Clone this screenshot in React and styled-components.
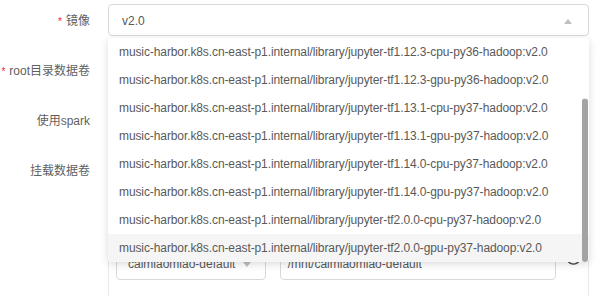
import React, { useLayoutEffect, useRef } from 'react';
import styled, { createGlobalStyle } from 'styled-components';

const Global = createGlobalStyle`
  html, body { margin: 0; padding: 0; background: #fff; }
  body {
    font-family: "Liberation Sans", "Noto Sans CJK SC", sans-serif;
    overflow: hidden;
  }
`;

const Page = styled.div`
  width: 600px;
  height: 296px;
  overflow: hidden;
  padding-top: 4px;
  box-sizing: border-box;
`;

const Row = styled.div`
  display: flex;
  align-items: flex-start;
  height: 32px;
  margin-bottom: 18px;
`;

const Label = styled.label`
  width: 108px;
  height: 32px;
  flex: none;
  box-sizing: border-box;
  padding: 2px 18px 0 0;
  display: flex;
  align-items: center;
  justify-content: flex-end;
  font-size: 12px;
  line-height: 1;
  color: #5f5f5f;
  white-space: nowrap;
`;

const Req = styled.span`
  color: #f5222d;
  font-size: 10px;
  margin-right: 4px;
  margin-top: 2px;
`;

const Control = styled.div`
  width: 481px;
  flex: none;
  position: relative;
`;

const SelectBox = styled.div`
  height: 32px;
  box-sizing: border-box;
  border: 1px solid #d9d9d9;
  border-radius: 4px;
  display: flex;
  align-items: center;
  justify-content: space-between;
  padding: 2px 16px 0 13px;
  font-size: 12px;
  color: #595959;
  background: #fff;
`;

const Menu = styled.div`
  position: absolute;
  top: 34px;
  left: 0;
  width: 481px;
  height: 224px;
  background: #fff;
  border-radius: 4px;
  box-shadow: 0 2px 8px rgba(0, 0, 0, 0.15);
  z-index: 10;
`;

const List = styled.div`
  height: 100%;
  overflow: hidden;
  border-radius: 4px;
`;

const Thumb = styled.div`
  position: absolute;
  right: 1px;
  top: 61px;
  width: 6px;
  height: 163px;
  background: #a3a3a3;
  border-radius: 2px 2px 3px 3px;
  box-shadow: 0 -1px 0 #eee;
`;

const Option = styled.div`
  height: 28px;
  line-height: 28px;
  padding: 0 11px;
  font-size: 12px;
  letter-spacing: -0.1px;
  color: #595959;
  white-space: nowrap;
  background: ${p => (p.$active ? '#f5f5f5' : '#fff')};
`;

const Switch = styled.div`
  width: 44px;
  height: 22px;
  margin-top: 5px;
  border-radius: 11px;
  background: #bfbfbf;
`;

const Card = styled.div`
  border: 1px solid #e8e8e8;
  border-bottom: none;
  border-radius: 4px 4px 0 0;
  padding: 9px 7px 40px;
  display: flex;
  flex-direction: column;
  gap: 10px;
  box-sizing: border-box;
  width: 481px;
`;

const VolRow = styled.div`
  display: flex;
  align-items: flex-start;
  gap: 14px;
`;

const VolSelect = styled.div`
  width: 151px;
  height: 32px;
  box-sizing: border-box;
  border: 1px solid #d9d9d9;
  border-radius: 4px;
  display: flex;
  align-items: center;
  justify-content: space-between;
  padding: 0 14px 0 11px;
  font-size: 12px;
  color: #595959;
`;

const VolInput = styled.div`
  width: 279px;
  height: 32px;
  box-sizing: border-box;
  border: 1px solid #d9d9d9;
  border-radius: 4px;
  display: flex;
  align-items: center;
  padding: 0 7px;
  font-size: 12px;
  color: #595959;
`;

const RemoveIcon = styled.svg`
  flex: none;
  margin-top: 2px;
  margin-left: -4px;
`;

const Caret = ({ up }) => (
  <svg width="8" height="5" viewBox="0 0 8 5">
    <path d={up ? 'M0 5 L4 0 L8 5 Z' : 'M0 0 L4 5 L8 0 Z'} fill="#bfbfbf" />
  </svg>
);

const prefix = 'music-harbor.k8s.cn-east-p1.internal/library/jupyter-';
const options = [
  'tf1.10.0-cpu-py36-hadoop:v2.0',
  'tf1.10.0-gpu-py36-hadoop:v2.0',
  'tf1.11.0-cpu-py36-hadoop:v2.0',
  'tf1.12.3-cpu-py36-hadoop:v2.0',
  'tf1.12.3-gpu-py36-hadoop:v2.0',
  'tf1.13.1-cpu-py37-hadoop:v2.0',
  'tf1.13.1-gpu-py37-hadoop:v2.0',
  'tf1.14.0-cpu-py37-hadoop:v2.0',
  'tf1.14.0-gpu-py37-hadoop:v2.0',
  'tf2.0.0-cpu-py37-hadoop:v2.0',
  'tf2.0.0-gpu-py37-hadoop:v2.0',
];

export default function App() {
  const listRef = useRef(null);
  useLayoutEffect(() => {
    if (listRef.current) listRef.current.scrollTop = listRef.current.scrollHeight;
  }, []);

  return (
    <Page>
      <Global />
      <Row>
        <Label><Req>*</Req>镜像</Label>
        <Control>
          <SelectBox>
            <span>v2.0</span>
            <Caret up />
          </SelectBox>
          <Menu>
            <List ref={listRef}>
              {options.map((o, i) => (
                <Option key={o} $active={i === options.length - 1}>{prefix + o}</Option>
              ))}
            </List>
            <Thumb />
          </Menu>
        </Control>
      </Row>
      <Row>
        <Label><Req>*</Req>root目录数据卷</Label>
        <Control>
          <SelectBox>
            <span>caimiaomiao-default</span>
            <Caret />
          </SelectBox>
        </Control>
      </Row>
      <Row>
        <Label>使用spark</Label>
        <Control>
          <Switch />
        </Control>
      </Row>
      <Row>
        <Label>挂载数据卷</Label>
        <Control>
          <Card>
            <VolRow>
              <VolSelect><span>caimiaomiao-default</span><Caret /></VolSelect>
              <VolInput>/mnt/caimiaomiao-default</VolInput>
            </VolRow>
            <VolRow>
              <VolSelect><span>caimiaomiao-default</span><Caret /></VolSelect>
              <VolInput>/mnt/caimiaomiao-default</VolInput>
            </VolRow>
            <VolRow>
              <VolSelect><span>caimiaomiao-default</span><Caret /></VolSelect>
              <VolInput>/mnt/caimiaomiao-default</VolInput>
              <RemoveIcon width="15" height="15" viewBox="0 0 15 15">
                <circle cx="7.5" cy="7.5" r="6.6" fill="none" stroke="#404040" strokeWidth="1.3" />
                <path d="M4.5 7.5 H10.5" stroke="#404040" strokeWidth="1.3" />
              </RemoveIcon>
            </VolRow>
          </Card>
        </Control>
      </Row>
    </Page>
  );
}
